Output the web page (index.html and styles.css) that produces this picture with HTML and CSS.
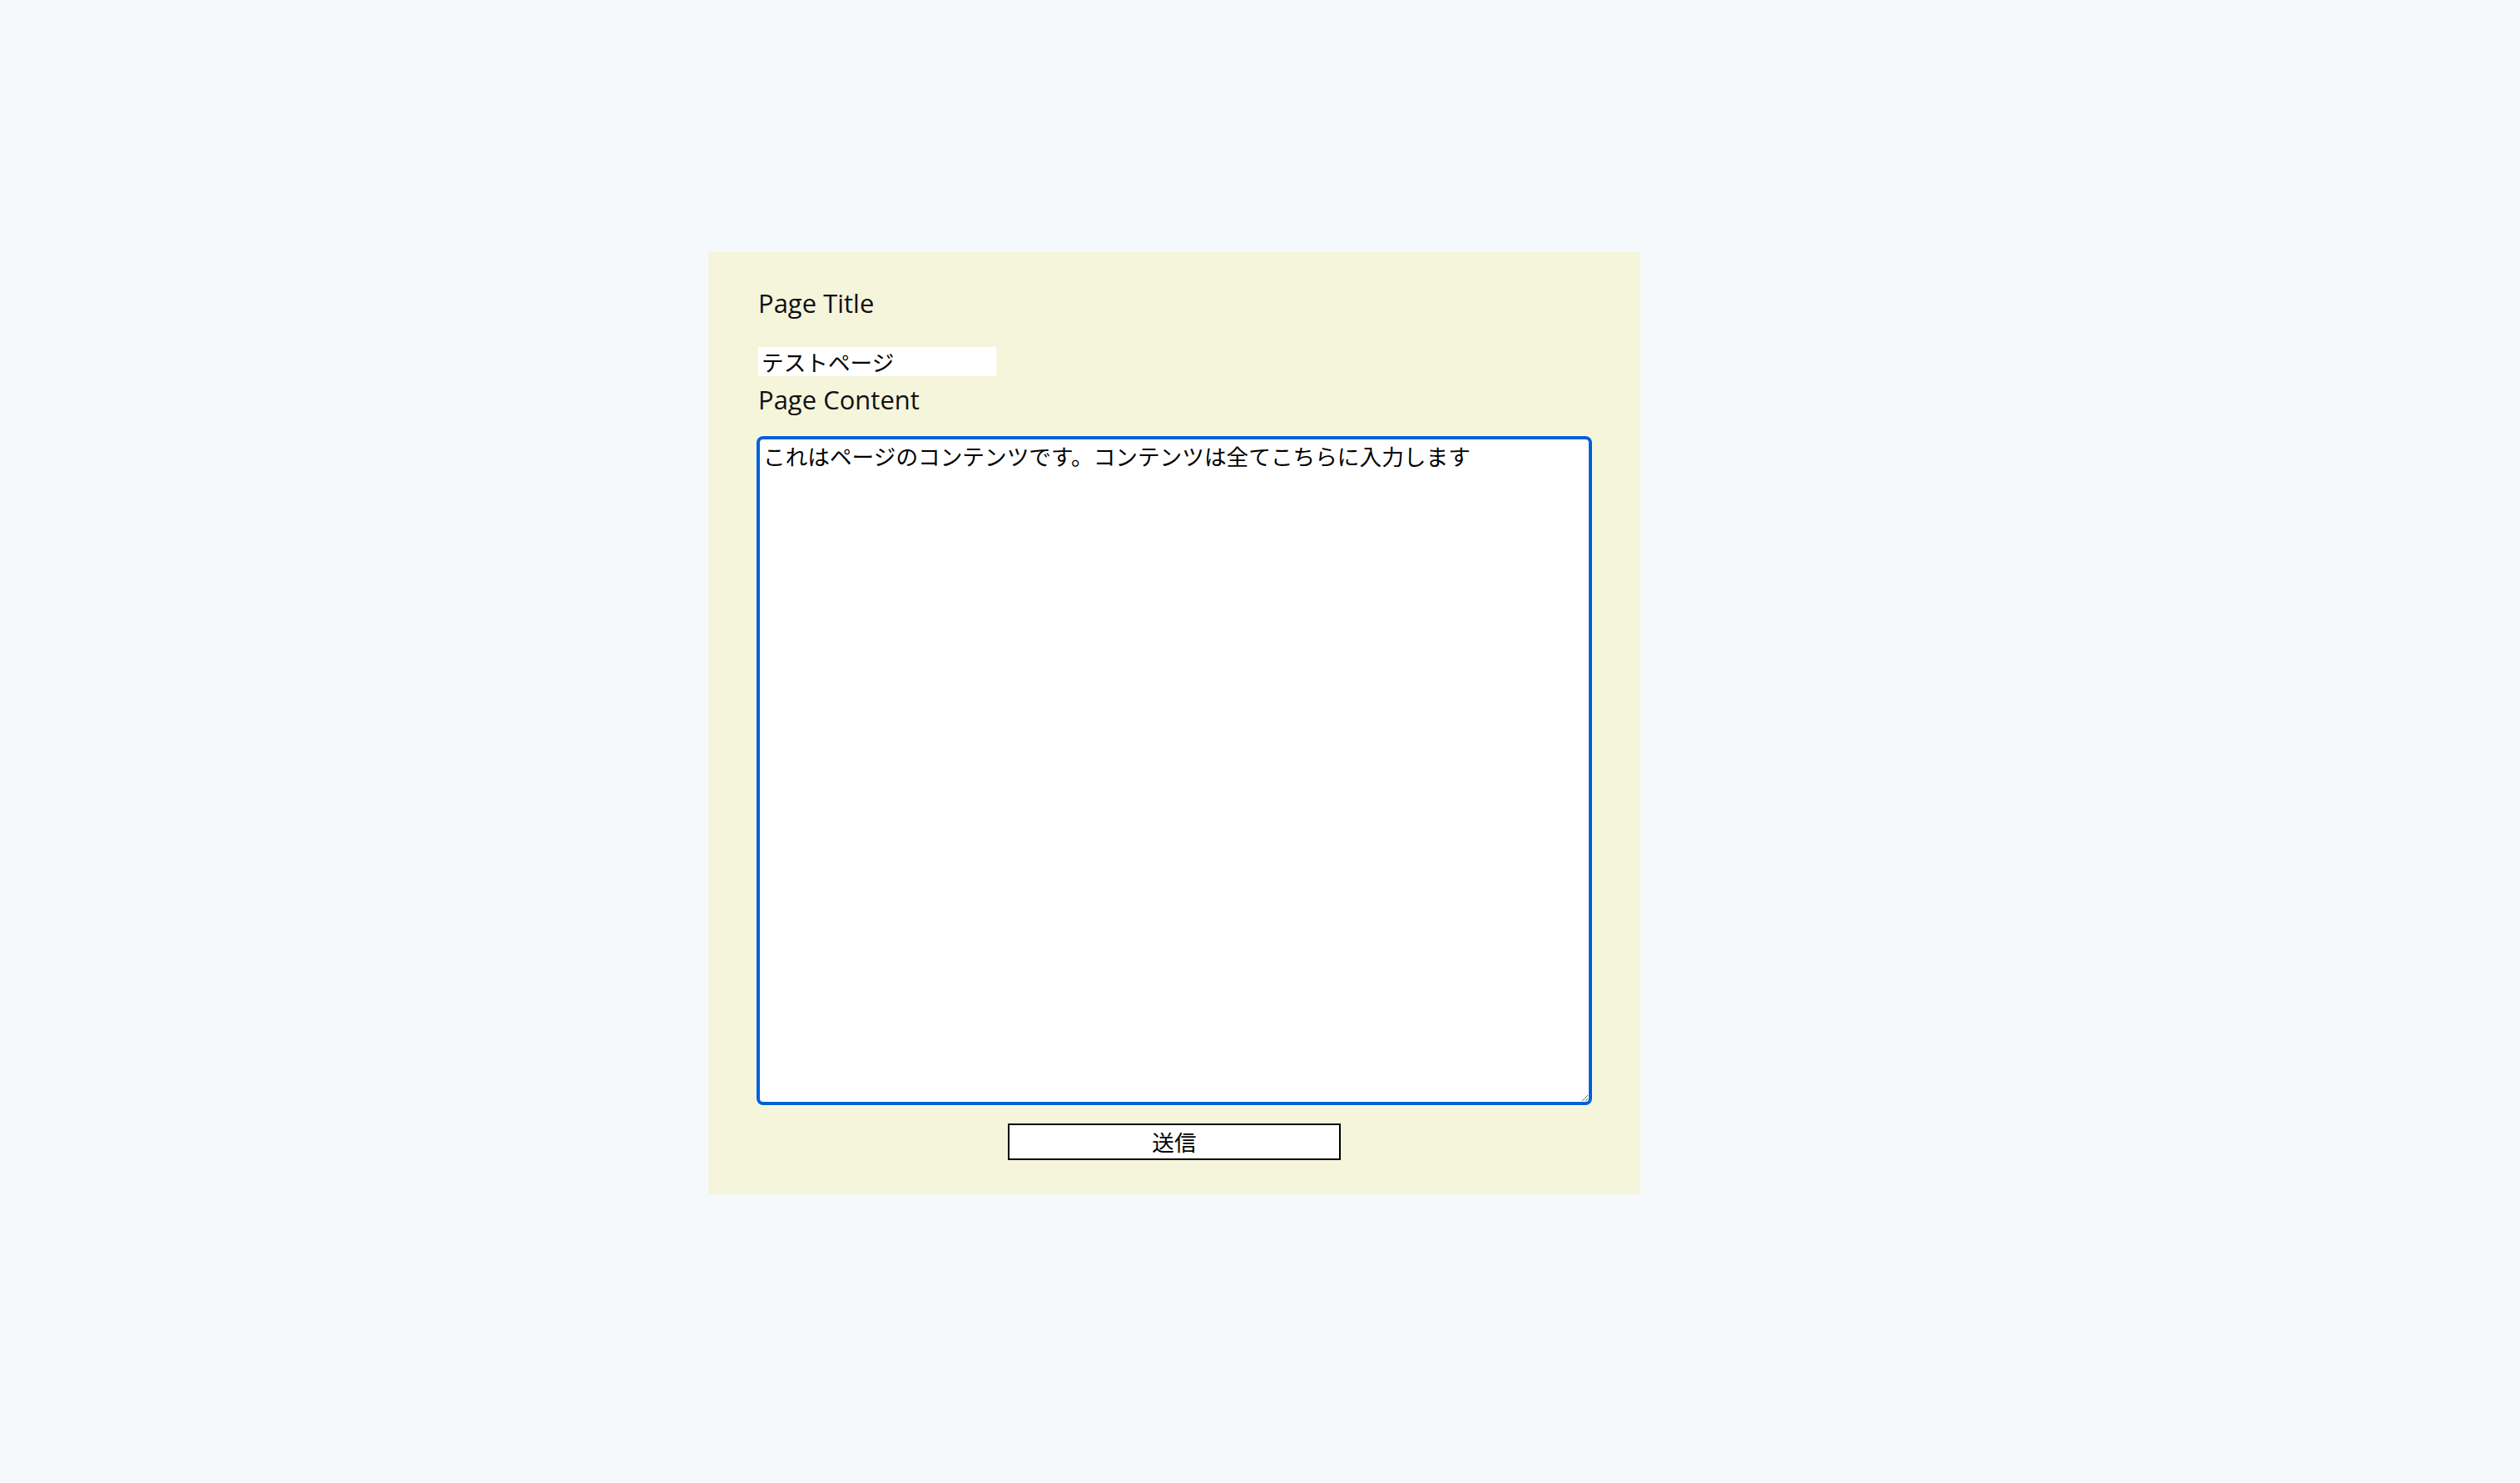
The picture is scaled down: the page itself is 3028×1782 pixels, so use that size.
FILE: index.html
```html
<!DOCTYPE html>
<html lang="ja">
<head>
<meta charset="utf-8">
<title>Page Form</title>
<link rel="stylesheet" href="styles.css">
</head>
<body>
<form class="panel">
  <label class="label" for="title">Page Title</label>
  <input class="title-input" id="title" type="text" value="テストページ">
  <label class="label label-content" for="content">Page Content</label>
  <textarea class="content-input" id="content">これはページのコンテンツです。コンテンツは全てこちらに入力します</textarea>
  <div class="actions">
    <button class="submit" type="button">送信</button>
  </div>
</form>
</body>
</html>
```
FILE: styles.css
```css
html, body {
  margin: 0;
  padding: 0;
  background: #f6f9fc;
}

body {
  min-height: 1782px;
}

.panel {
  box-sizing: border-box;
  width: 1120px;
  margin: 302px 0 0 851px;
  padding: 42px 60px 41px 60px;
  background: #f5f5dc;
  display: flex;
  flex-direction: column;
  align-items: flex-start;
}

.label {
  font-family: "Open Sans", "Noto Sans", sans-serif;
  font-size: 31px;
  line-height: 40px;
  color: #111;
  display: block;
}

.title-input {
  box-sizing: border-box;
  margin-top: 33px;
  width: 286px;
  height: 35px;
  border: none;
  padding: 0 4px;
  background: #fff;
  font-family: "Noto Sans CJK JP", sans-serif;
  font-size: 26.67px;
  line-height: 35px;
  color: #000;
  outline: none;
}

.label-content {
  margin-top: 8px;
}

.content-input {
  box-sizing: border-box;
  margin-top: 26px;
  width: 1000px;
  height: 800px;
  border: 2px solid #0061d4;
  border-radius: 6px;
  box-shadow: 0 0 0 2px #0061d4, 0 0 0 3px #ffffff;
  padding: 2px 4px;
  background: #fff;
  font-family: "Noto Sans CJK JP", sans-serif;
  font-size: 26.67px;
  line-height: 36px;
  color: #000;
  outline: none;
  resize: both;
}

.actions {
  align-self: stretch;
  display: flex;
  justify-content: center;
  margin-top: 24px;
}

.submit {
  box-sizing: border-box;
  width: 400px;
  height: 44px;
  border: 2px solid #000;
  border-radius: 0;
  background: #fff;
  padding: 0;
  font-family: "Noto Sans CJK JP", sans-serif;
  font-size: 26.67px;
  line-height: 38px;
  color: #000;
}
```
